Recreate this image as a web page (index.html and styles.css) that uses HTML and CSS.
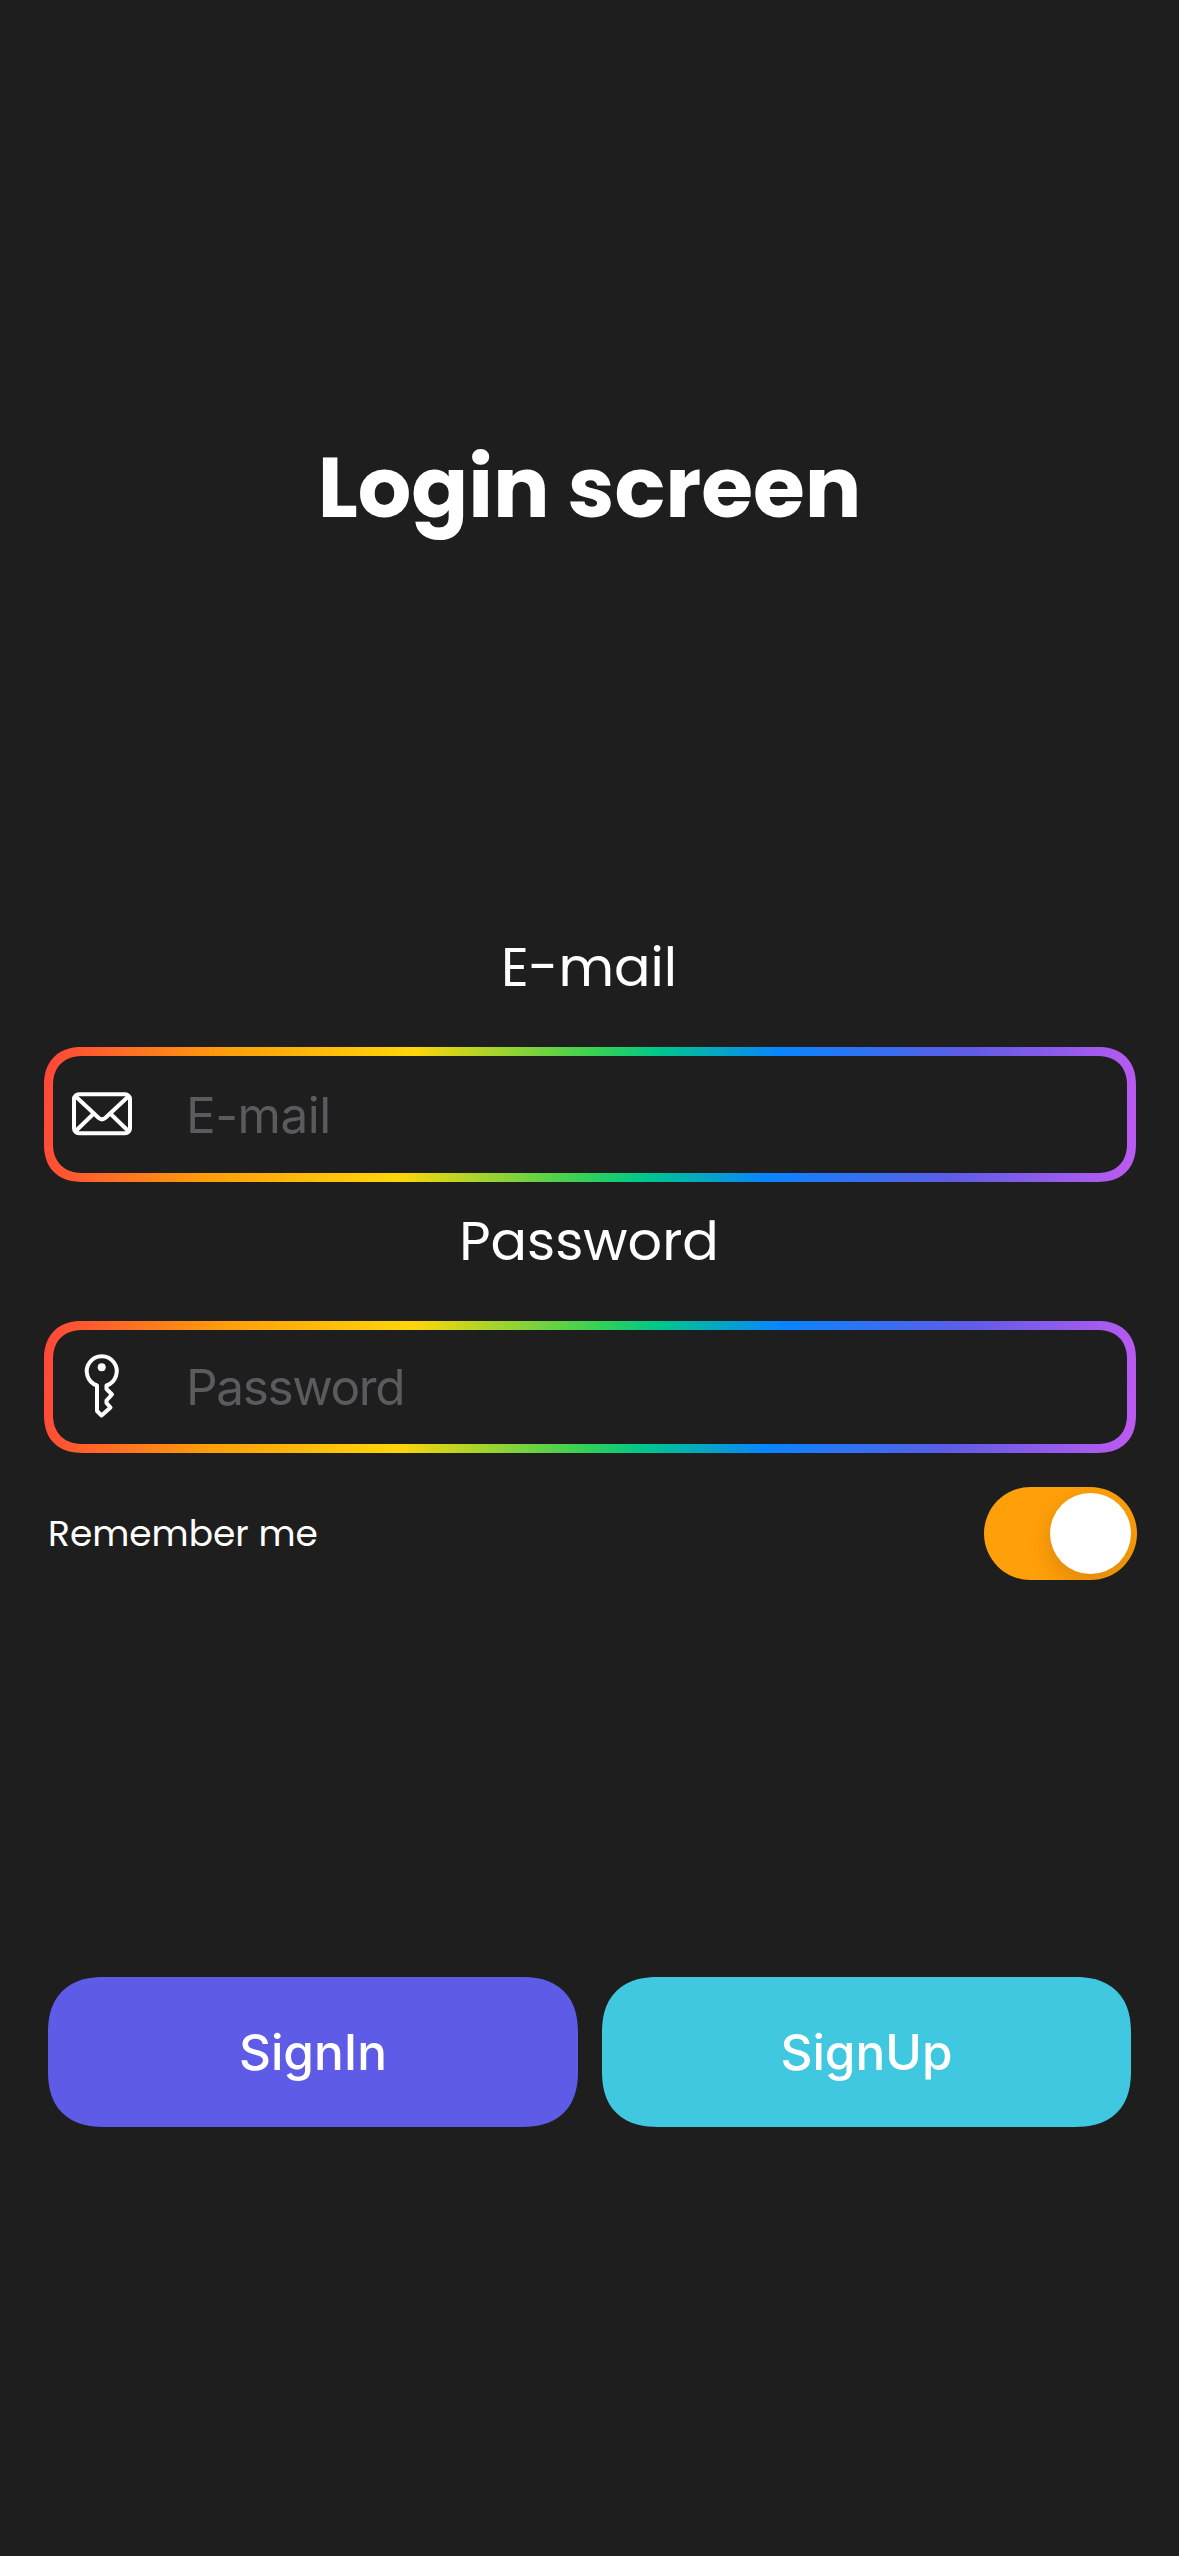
FILE: index.html
```html
<!DOCTYPE html>
<html lang="en">
<head>
<meta charset="utf-8">
<title>Login screen</title>
<link rel="stylesheet" href="styles.css">
</head>
<body>
<main class="screen">
  <h1 class="title"><span>Login screen</span></h1>
  <form class="form">
    <label class="label label-email" for="email"><span>E-mail</span></label>
    <div class="field field-email">
      <svg class="icon" viewBox="0 0.7 68 68" fill="none" stroke="#fff" stroke-width="4" stroke-linejoin="round" stroke-linecap="round">
        <rect x="6" y="14" width="56" height="39" rx="5"/>
        <path d="M8 16.5 30.5 37.5Q34 40.500 37.500 37.500L60 16.500M8 50.500 25 34M60 50.500 43 34"/>
      </svg>
      <input class="input input-email" id="email" type="text" placeholder="E-mail">
    </div>
    <label class="label label-password" for="password"><span>Password</span></label>
    <div class="field field-password">
      <svg class="icon" viewBox="0 2 68 68" fill="none" stroke="#fff" stroke-width="4" stroke-linejoin="round" stroke-linecap="round">
        <path d="M29 34.500A15 15 0 1 1 38.500 34.500V38L44 43.500 38.500 49.500V52L42.500 56.500 33.500 64.500 29 60Z"/>
        <circle cx="33.700" cy="16.200" r="4" fill="#fff" stroke="none"/>
      </svg>
      <input class="input input-password" id="password" type="text" placeholder="Password">
    </div>
    <div class="remember">
      <span class="remember-text">Remember me</span>
      <span class="switch"><span class="knob"></span></span>
    </div>
    <div class="actions">
      <button class="button signin" type="button">SignIn</button>
      <button class="button signup" type="button">SignUp</button>
    </div>
  </form>
</main>
</body>
</html>
```

FILE: styles.css
```css
* { box-sizing: border-box; }
body { margin: 0; background: #1e1e1e; }
.screen {
  width: 1179px;
  height: 2556px;
  padding-top: 428px;
  overflow: hidden;
  background: #1e1e1e;
  color: #fff;
  font-family: Poppins, Inter, "Liberation Sans", sans-serif;
}
.title {
  margin: 0;
  height: 120px;
  line-height: 120px;
  font-size: 84px;
  font-weight: 700;
  text-align: center;
}
.form { display: flex; flex-direction: column; padding: 379px 42px 0 44px; }
.label {
  height: 80px;
  padding-right: 3px;
  line-height: 80px;
  font-size: 54px;
  font-weight: 400;
  text-align: center;
}
.field {
  display: flex;
  align-items: center;
  gap: 50px;
  width: 1092px;
  padding-left: 15px;
  border: 9px solid transparent;
  border-radius: 33px;
  background:
    linear-gradient(#1e1e1e, #1e1e1e) padding-box,
    linear-gradient(97deg, #ff453a, #ff9f0a 16.67%, #ffd60a 33.33%, #30d158 50.5%, #00c78c 55.5%, #0a84ff 66.67%, #5e5ce6 83.33%, #bf5af2) border-box;
}
.field-email { height: 135px; margin-top: 40px; }
.label-password { margin-top: 19px; }
.field-password { height: 132px; margin-top: 40px; }
.icon { width: 68px; height: 68px; flex: none; }
.input {
  flex: 1;
  min-width: 0;
  padding: 0;
  border: 0;
  outline: 0;
  background: transparent;
  color: #fff;
  font: 400 49.5px/70px Inter, "Liberation Sans", sans-serif;
}
.input::placeholder { color: #5b5b5e; opacity: 1; }
.input-email { letter-spacing: -.5px; }
.input-password { letter-spacing: -1.35px; }
.remember {
  display: flex;
  justify-content: space-between;
  align-items: center;
  height: 93px;
  margin-top: 34px;
  padding-left: 4px;
}
.remember-text { font-size: 36px; }
.switch {
  display: flex;
  justify-content: flex-end;
  width: 153px;
  height: 93px;
  padding: 6px;
  border-radius: 47px;
  overflow: hidden;
  background: #ff9f0a;
}
.knob {
  width: 81px;
  height: 81px;
  border-radius: 50%;
  background: #fff;
  box-shadow: 0 9px 24px rgba(0, 0, 0, .14);
}
.actions {
  display: grid;
  grid-template-columns: 530px 529px;
  gap: 24px;
  margin-top: 397px;
  padding-left: 4px;
}
.button {
  height: 150px;
  padding: 0;
  border: 0;
  border-radius: 47px;
  color: #fff;
  font: 500 49.5px/60px Inter, "Liberation Sans", sans-serif;
}
.signin { background: #5e5ce6; }
.signup { background: #40c8e0; }
@supports (corner-shape: superellipse(1.3)) {
  .field { border-radius: 38px; corner-shape: superellipse(1.2); }
  .button { border-radius: 56px; corner-shape: superellipse(1.25); }
}
```
